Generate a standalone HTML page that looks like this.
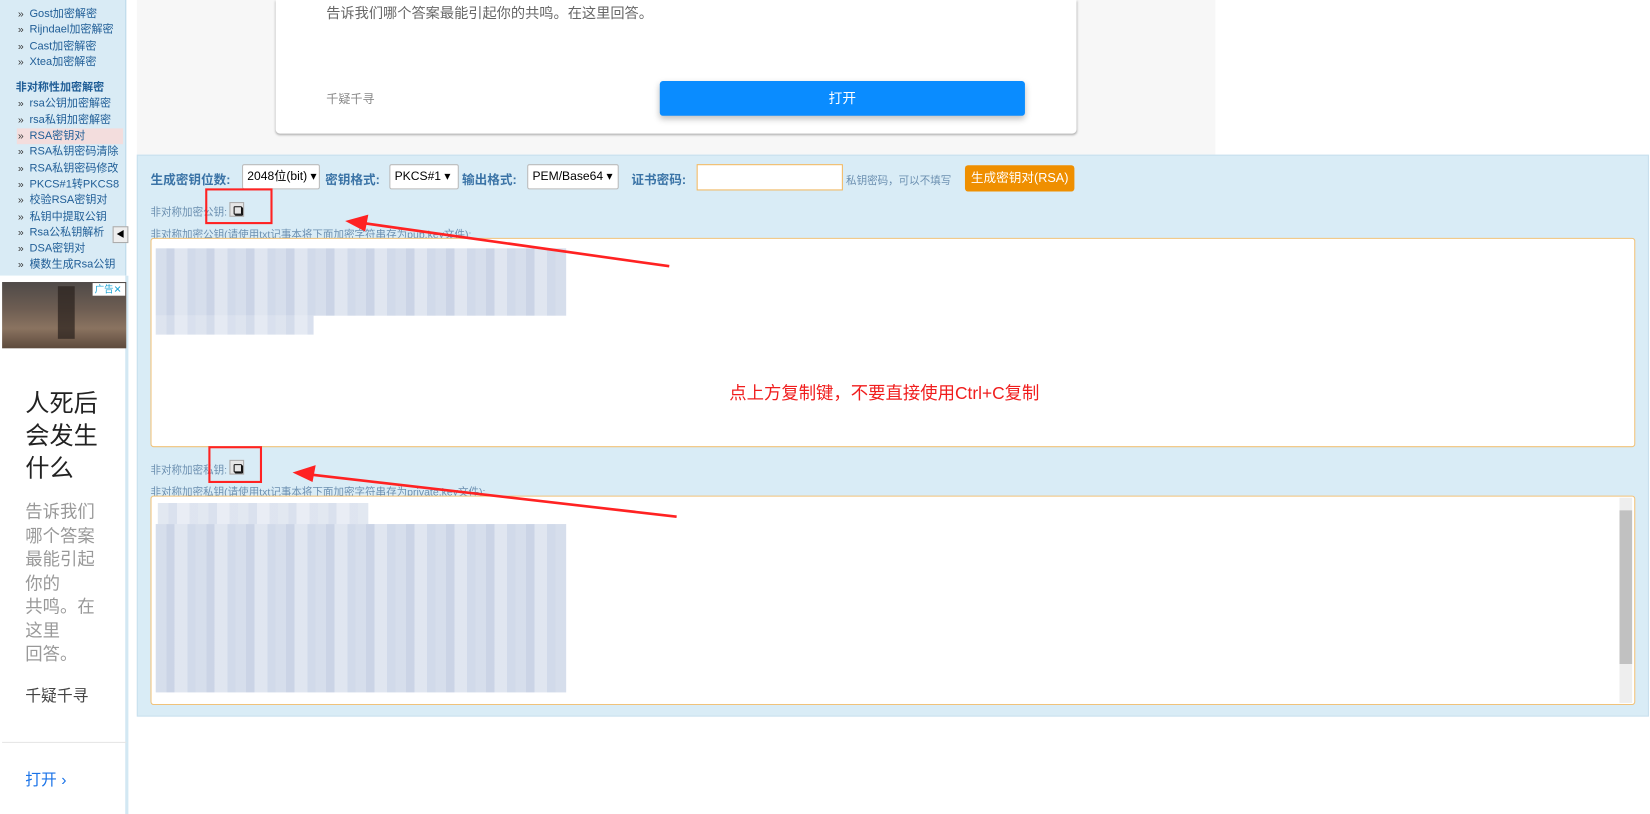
<!DOCTYPE html>
<html><head><meta charset="utf-8"><style>
*{margin:0;padding:0;box-sizing:border-box}
body{width:1650px;height:774px;background:#fff;position:relative;overflow:hidden;font-family:"Liberation Sans","Noto Sans CJK SC",sans-serif}
#wrap{position:absolute;left:0;top:0;width:1568px;height:736px;transform:scale(1.0523);transform-origin:0 0}
.a{position:absolute}
#side{left:0;top:0;width:120px;height:262px;background:#d9ebf5;border-right:1px solid #bcd9ea;padding-top:6px}
#side div{font-size:10.5px;color:#1f5d96;height:15.3px;line-height:15px;padding-left:28px;position:relative;white-space:nowrap}
#side div:before{content:"»";position:absolute;left:17px;color:#333;font-size:10px}
#side .h{font-weight:bold;color:#1f5d96;padding-left:15px;margin-top:9px;margin-bottom:0}
#side .h:before{content:""}
#side .sel{background:#f3dddd;margin-left:16px;padding-left:12px;margin-right:2px}
#side .sel:before{left:1px}
.lab{font-size:10px;color:#6b8fb0}
.bl{font-size:12px;font-weight:bold;color:#3a73a6}
.sel2{position:absolute;background:#fff;border:1px solid #bbb;border-radius:2px;font-size:11.5px;color:#000;height:24px;line-height:22px;padding-left:4px}
.ta{position:absolute;background:#fff;border:1px solid #f0c27a;border-radius:3px}
.blur{position:absolute;background:repeating-linear-gradient(90deg,#cfd8e8 0 10px,#c2cde2 10px 18px,#dae1ee 18px 30px,#c9d3e6 30px 38px)}
.cp{position:absolute;width:14px;height:14px;border:1px solid #aaa;background:#e6e6e6}
.cp:after{content:"";position:absolute;left:3px;top:3px;width:6px;height:6px;border:1.5px solid #111;border-radius:1px;box-shadow:1px 1px 0 #111}
.rb{position:absolute;border:2px solid #f22}
</style></head><body><div id="wrap">
<div class="a" id="side">
<div>Gost加密解密</div><div>Rijndael加密解密</div><div>Cast加密解密</div><div>Xtea加密解密</div>
<div class="h">非对称性加密解密</div>
<div>rsa公钥加密解密</div><div>rsa私钥加密解密</div><div class="sel">RSA密钥对</div><div>RSA私钥密码清除</div><div>RSA私钥密码修改</div><div>PKCS#1转PKCS8</div><div>校验RSA密钥对</div><div>私钥中提取公钥</div><div>Rsa公私钥解析</div><div>DSA密钥对</div><div>模数生成Rsa公钥</div>
</div>
<div class="a" style="left:107px;top:215px;width:15px;height:16px;background:#eee;border:1px solid #aaa;font-size:8px;text-align:center;line-height:14px">◀</div>
<div class="a" style="left:0;top:262px;width:122px;height:512px;background:#fff;border-right:3px solid #d3e8f3"></div>
<div class="a" style="left:2px;top:268px;width:118px;height:63px;background:linear-gradient(180deg,#4f4a48 0%,#6d5d52 40%,#8a7360 70%,#5d4a3c 100%)"></div>
<div class="a" style="left:55px;top:272px;width:16px;height:50px;background:#2a211c;opacity:.7"></div>
<div class="a" style="left:88px;top:269px;width:31px;height:12px;background:#fff;font-size:9px;color:#1aa3d4;line-height:12px;padding-left:2px">广告✕</div>
<div class="a" style="left:24px;top:366px;font-size:23px;line-height:31px;color:#222;width:80px;font-family:'Noto Sans CJK SC',sans-serif">人死后<br>会发生<br>什么</div>
<div class="a" style="left:24px;top:474px;font-size:16.5px;line-height:22.5px;color:#999;width:80px;font-family:'Noto Sans CJK SC',sans-serif">告诉我们<br>哪个答案<br>最能引起<br>你的<br>共鸣。在<br>这里<br>回答。</div>
<div class="a" style="left:24px;top:650px;font-size:15px;color:#444;font-family:'Noto Sans CJK SC',sans-serif">千疑千寻</div>
<div class="a" style="left:2px;top:705px;width:118px;border-top:1px solid #e5e5e5"></div>
<div class="a" style="left:24px;top:730px;font-size:15px;color:#1a73e8">打开 ›</div>

<div class="a" style="left:130px;top:0;width:1025px;height:147px;background:#f7f7f7"></div>
<div class="a" style="left:262px;top:0;width:761px;height:127px;background:#fff;border-radius:0 0 4px 4px;box-shadow:0 1px 2px #aaa"></div>
<div class="a" style="left:310px;top:1px;font-size:13.5px;color:#666;font-family:'Noto Sans CJK SC',sans-serif">告诉我们哪个答案最能引起你的共鸣。在这里回答。</div>
<div class="a" style="left:310px;top:86px;font-size:11.5px;color:#888;font-family:'Noto Sans CJK SC',sans-serif">千疑千寻</div>
<div class="a" style="left:627px;top:77px;width:347px;height:33px;background:#0a8cff;border-radius:3px;box-shadow:0 3px 6px rgba(0,0,0,.25);color:#fff;text-align:center;line-height:33px;font-size:13px">打开</div>

<div class="a" style="left:130px;top:147px;width:1437px;height:534px;background:#d9ecf6;border:1px solid #c8e0ee"></div>
<div class="a bl" style="left:143px;top:162px">生成密钥位数:</div>
<div class="sel2" style="left:230px;top:156px;width:74px">2048位(bit) ▾</div>
<div class="a bl" style="left:309px;top:162px">密钥格式:</div>
<div class="sel2" style="left:370px;top:156px;width:66px">PKCS#1 ▾</div>
<div class="a bl" style="left:439px;top:162px">输出格式:</div>
<div class="sel2" style="left:501px;top:156px;width:87px">PEM/Base64 ▾</div>
<div class="a bl" style="left:600px;top:162px">证书密码:</div>
<div class="a" style="left:662px;top:156px;width:139px;height:25px;background:#fff;border:1px solid #f0b760"></div>
<div class="a lab" style="left:804px;top:163px">私钥密码，可以不填写</div>
<div class="a" style="left:917px;top:157px;width:104px;height:25px;background:#ef8f00;border-radius:3px;color:#fff;font-size:12px;line-height:25px;text-align:center">生成密钥对(RSA)</div>

<div class="a lab" style="left:143px;top:193px">非对称加密公钥:</div>
<div class="cp" style="left:218px;top:192px"></div>
<div class="a lab" style="left:143px;top:214px">非对称加密公钥(请使用txt记事本将下面加密字符串存为pub.key文件):</div>
<div class="ta" style="left:143px;top:226px;width:1411px;height:199px"></div>
<div class="blur" style="left:148px;top:236px;width:390px;height:64px;opacity:.85"></div>
<div class="blur" style="left:148px;top:300px;width:150px;height:18px;opacity:.7"></div>
<div class="a" style="left:693px;top:360px;font-size:16.5px;color:#f01d1d">点上方复制键，不要直接使用Ctrl+C复制</div>

<div class="a lab" style="left:143px;top:438px">非对称加密私钥:</div>
<div class="cp" style="left:218px;top:437px"></div>
<div class="a lab" style="left:143px;top:459px">非对称加密私钥(请使用txt记事本将下面加密字符串存为private.key文件):</div>
<div class="ta" style="left:143px;top:471px;width:1411px;height:199px"></div>
<div class="blur" style="left:150px;top:478px;width:200px;height:20px;opacity:.6"></div>
<div class="blur" style="left:148px;top:498px;width:390px;height:160px;opacity:.85"></div>
<div class="a" style="left:1539px;top:473px;width:12px;height:195px;background:#eee"></div>
<div class="a" style="left:1539px;top:485px;width:12px;height:146px;background:#c1c1c1"></div>

<div class="rb" style="left:195px;top:179px;width:64px;height:34px"></div>
<div class="rb" style="left:198px;top:424px;width:51px;height:35px"></div>
<svg class="a" style="left:0;top:0" width="1568" height="736">
<line x1="636" y1="253" x2="345" y2="212" stroke="#f22" stroke-width="2.5"/>
<polygon points="328,210 350,204 347,220" fill="#f22"/>
<line x1="643" y1="491" x2="295" y2="451" stroke="#f22" stroke-width="2.5"/>
<polygon points="278,449 300,442 297,458" fill="#f22"/>
</svg>
</div></body></html>
